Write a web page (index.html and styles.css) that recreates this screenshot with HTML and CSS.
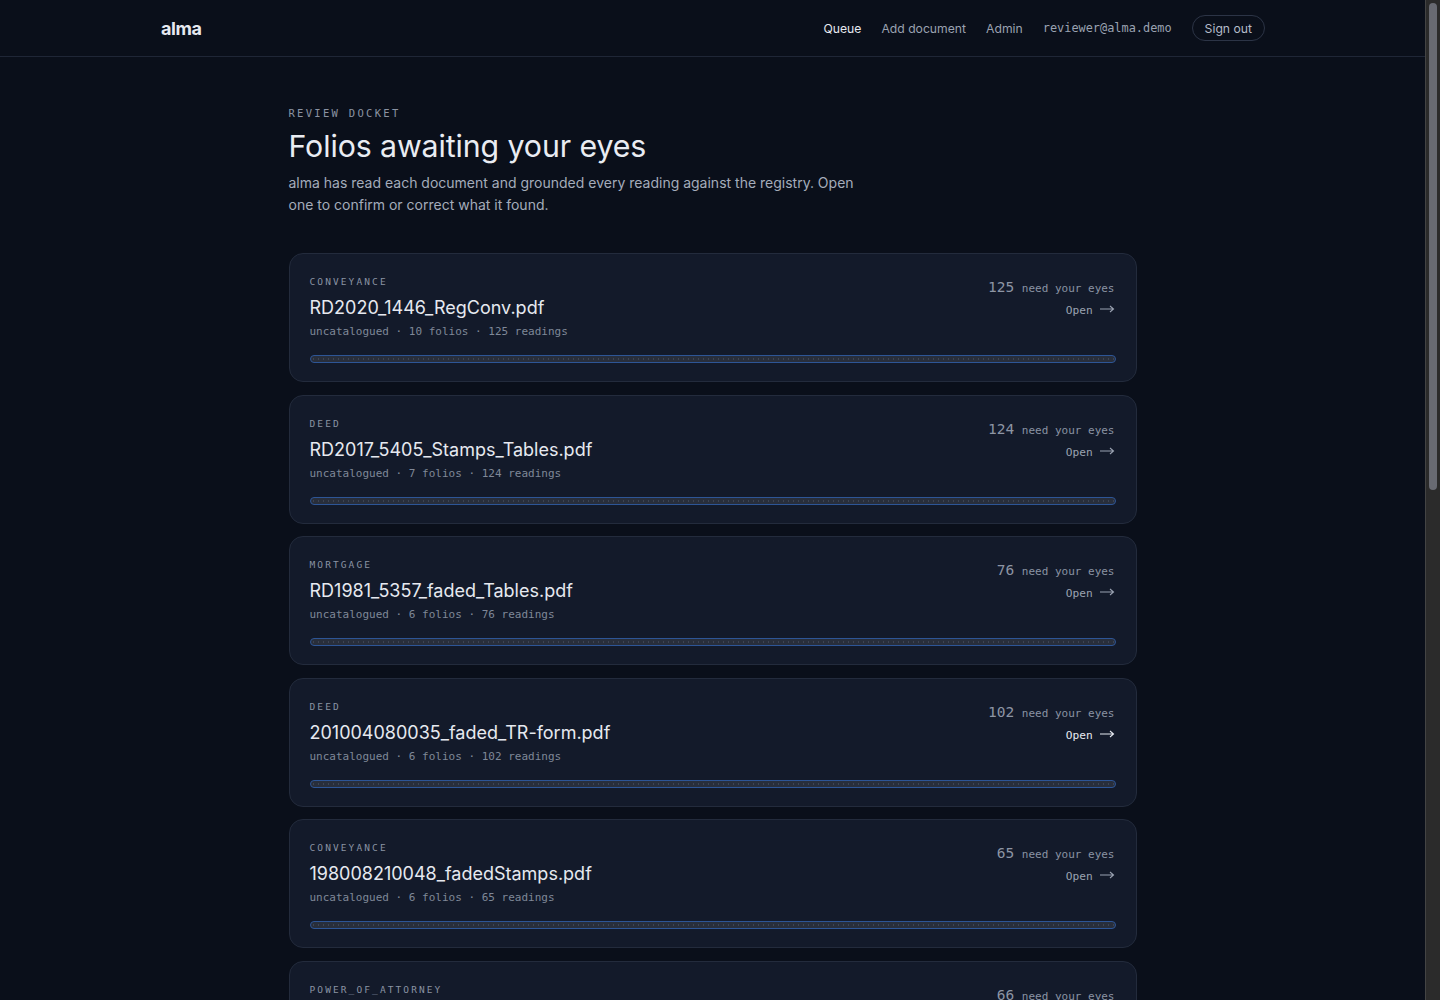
FILE: index.html
```html
<!DOCTYPE html>
<html lang="en">
<head>
  <meta charset="UTF-8">
  <title>alma · Review docket</title>
  <link rel="stylesheet" href="styles.css">
</head>
<body>

  <header class="topbar">
    <div class="topbar-inner">
      <a class="brand" href="#">alma</a>
      <nav class="nav">
        <a href="#" class="nav-link active">Queue</a>
        <a href="#" class="nav-link">Add document</a>
        <a href="#" class="nav-link">Admin</a>
        <span class="nav-user">reviewer@alma.demo</span>
        <button class="btn-signout">Sign out</button>
      </nav>
    </div>
  </header>

  <main class="page">
    <div class="eyebrow">Review docket</div>
    <h1 class="title">Folios awaiting your eyes</h1>
    <p class="lead">alma has read each document and grounded every reading against the registry. Open one to confirm or correct what it found.</p>

    <div id="docket" class="docket"></div>
  </main>

  <div class="scrollbar" aria-hidden="true"><div class="scrollbar-thumb"></div></div>

  <script>
    const documentos = [
      { tipo: "CONVEYANCE", nome: "RD2020_1446_RegConv.pdf", folios: 10, leituras: 125, pendentes: 125 },
      { tipo: "DEED", nome: "RD2017_5405_Stamps_Tables.pdf", folios: 7, leituras: 124, pendentes: 124 },
      { tipo: "MORTGAGE", nome: "RD1981_5357_faded_Tables.pdf", folios: 6, leituras: 76, pendentes: 76 },
      { tipo: "DEED", nome: "201004080035_faded_TR-form.pdf", folios: 6, leituras: 102, pendentes: 102, hover: true },
      { tipo: "CONVEYANCE", nome: "198008210048_fadedStamps.pdf", folios: 6, leituras: 65, pendentes: 65 },
      { tipo: "POWER_OF_ATTORNEY", nome: "RD1994_0812_PoA_scan.pdf", folios: 5, leituras: 66, pendentes: 66 },
      { tipo: "MORTGAGE", nome: "RD2003_2291_Release.pdf", folios: 4, leituras: 58, pendentes: 58 }
    ];

    const seta = '<svg class="arrow" width="15" height="8" viewBox="0 0 15 8"><path d="M0 4H13.5M10 1L13.5 4L10 7" fill="none" stroke="currentColor" stroke-width="1.1"/></svg>';

    function montarDocket() {
      const lista = document.getElementById("docket");
      lista.innerHTML = "";
      documentos.forEach(d => {
        const card = document.createElement("a");
        card.href = "#";
        card.className = "card" + (d.hover ? " is-hover" : "");
        card.innerHTML = `
          <div class="card-top">
            <div class="card-info">
              <div class="card-type">${d.tipo}</div>
              <div class="card-name">${d.nome}</div>
              <div class="card-meta">uncatalogued · ${d.folios} folios · ${d.leituras} readings</div>
            </div>
            <div class="card-side">
              <div class="card-count"><span class="count-num">${d.pendentes}</span> need your eyes</div>
              <div class="card-open">Open ${seta}</div>
            </div>
          </div>
          <div class="bar"><div class="bar-fill" style="width: ${100 - Math.round((d.pendentes / d.leituras) * 100)}%"></div></div>
        `;
        lista.appendChild(card);
      });
    }

    montarDocket();
  </script>
</body>
</html>
```

FILE: styles.css
```css
html {
  color-scheme: dark;
  background: #0a0f1a;
}

body {
  font-family: Inter, 'Noto Sans', sans-serif;
  background: #0a0f1a;
  color: #e4e7ee;
  margin: 0 15px 0 0;
}

a {
  color: inherit;
  text-decoration: none;
}

/* barra de rolagem desenhada, como no navegador escuro */
.scrollbar {
  position: fixed;
  top: 0;
  right: 0;
  width: 14px;
  height: 100%;
  background: #2b2b2b;
  border-left: 1px solid #444;
}

.scrollbar-thumb {
  margin: 3px 0 0 3px;
  width: 8px;
  height: 487px;
  border-radius: 4px;
  background: #686a72;
}

.topbar {
  border-bottom: 1px solid #1f2636;
}

.topbar-inner {
  max-width: 1105px;
  margin: 0 auto;
  height: 56px;
  display: flex;
  align-items: center;
  justify-content: space-between;
}

.brand {
  font-size: 18px;
  font-weight: 700;
  letter-spacing: -0.4px;
  color: #e6e9f0;
  padding-left: 1px;
}

.nav {
  display: flex;
  align-items: center;
  gap: 20px;
  font-size: 12.2px;
}

.nav-link {
  color: #9aa2b1;
}

.nav-link.active {
  color: #e6e9f0;
}

.nav-user {
  font-family: 'DejaVu Sans Mono', 'Liberation Mono', monospace;
  font-size: 11.9px;
  color: #9aa2b1;
}

.btn-signout {
  font-family: inherit;
  font-size: 12.2px;
  color: #b4bbc8;
  background: transparent;
  border: 1px solid #2c3446;
  border-radius: 999px;
  padding: 0 12px;
  height: 26px;
  cursor: pointer;
}

.page {
  max-width: 848px;
  margin: 0 auto;
  padding-top: 48px;
  padding-bottom: 60px;
}

.eyebrow {
  font-family: 'DejaVu Sans Mono', 'Liberation Mono', monospace;
  font-size: 10.5px;
  letter-spacing: 2.3px;
  text-transform: uppercase;
  color: #8b93a3;
  line-height: 16px;
}

.title {
  font-size: 30.3px;
  font-weight: 400;
  letter-spacing: -0.1px;
  color: #e9ecf2;
  margin: 6px 0 7px;
  line-height: 38px;
}

.lead {
  font-size: 14px;
  line-height: 22px;
  color: #a4acba;
  max-width: 575px;
  margin: 0 0 37px;
}

.docket {
  display: flex;
  flex-direction: column;
  gap: 12.5px;
}

.card {
  display: block;
  background: #131a2a;
  border: 1px solid #232b3c;
  border-radius: 14px;
  padding: 20px 20px 18px 20px;
}

.card-top {
  display: flex;
  justify-content: space-between;
  align-items: flex-start;
}

.card-type {
  font-family: 'DejaVu Sans Mono', 'Liberation Mono', monospace;
  font-size: 9.5px;
  letter-spacing: 2.1px;
  color: #8a93a3;
  line-height: 16px;
}

.card-name {
  font-size: 18px;
  color: #e6e9f0;
  line-height: 24px;
  margin-top: 6px;
}

.card-meta {
  font-family: 'DejaVu Sans Mono', 'Liberation Mono', monospace;
  font-size: 11px;
  color: #7f8898;
  line-height: 18px;
  margin-top: 3px;
}

.card-side {
  text-align: right;
  padding-right: 1px;
  font-family: 'DejaVu Sans Mono', 'Liberation Mono', monospace;
}

.card-count {
  font-size: 11px;
  color: #8a93a3;
  line-height: 20px;
  margin-top: 3px;
}

.count-num {
  font-size: 14.5px;
  color: #8d95a4;
  margin-right: 1px;
}

.card-open {
  font-size: 11.2px;
  color: #9aa2b1;
  line-height: 18px;
  margin-top: 3px;
}

.card.is-hover .card-open {
  color: #e6e9f0;
}

.arrow {
  vertical-align: 1px;
}

.bar {
  margin-top: 14px;
  height: 8px;
  box-sizing: border-box;
  border: 1px solid #2d5596;
  border-radius: 4px;
  background-color: #282e3b;
  background-image: radial-gradient(circle, #3d4453 0.6px, transparent 0.9px);
  background-size: 5px 6px;
  overflow: hidden;
}

.bar-fill {
  height: 100%;
  background: #3b6fd1;
}
```
